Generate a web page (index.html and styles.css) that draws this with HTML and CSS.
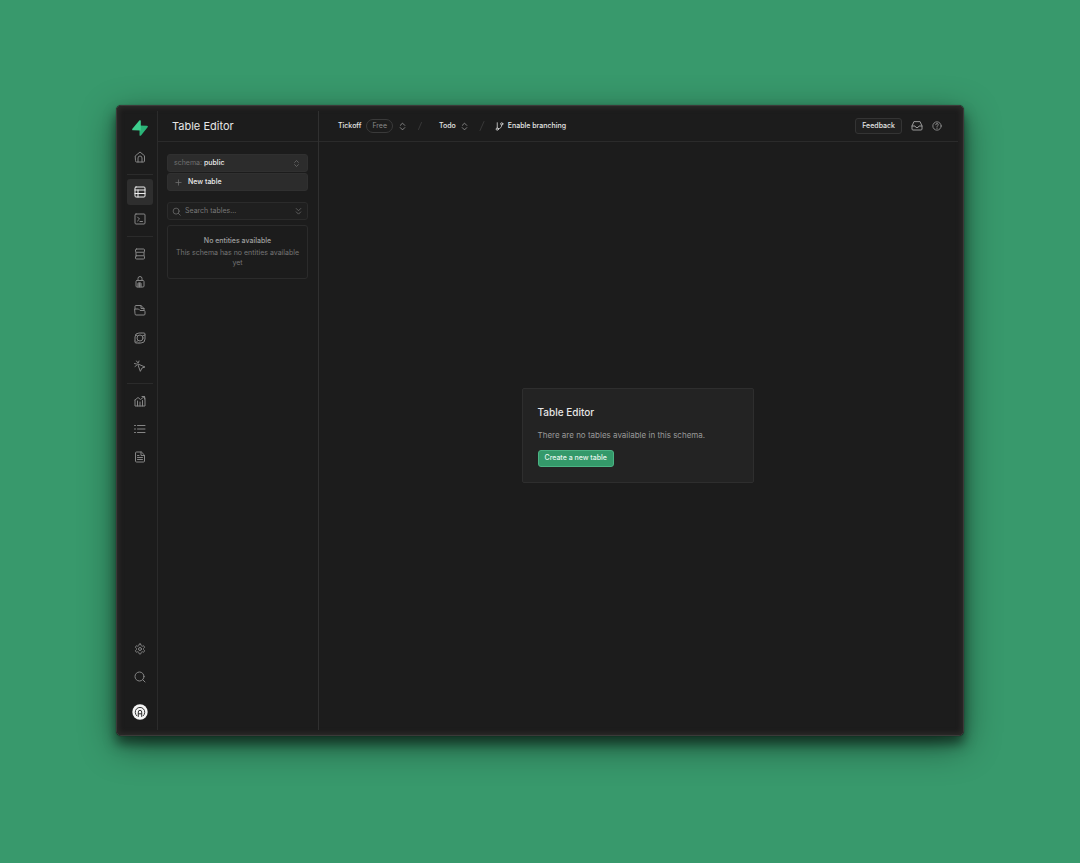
FILE: index.html
```html
<!DOCTYPE html>
<html lang="en">
<head>
<meta charset="utf-8">
<meta name="viewport" content="width=device-width, initial-scale=1">
<title>Table Editor</title>
<link rel="stylesheet" href="styles.css">
</head>
<body>
<div class="window">
  <nav class="rail" aria-label="Main">
    <a class="logo" href="#" aria-label="Dashboard">
      <svg viewBox="0 0 16 16"><path class="logo-dark" d="M7.500 15.200V5.600l7.400.1c.9 0 1.300.9.7 1.600L9 15.400c-.5.600-1.500.5-1.500-.2z"/><path class="logo-light" d="M8.800.8v9.700L1.100 10.300C.2 10.300-.1 9.400.4 8.700L7.300.6C7.800 0 8.800.1 8.800.8z"/></svg>
    </a>
    <div class="group group-home">
      <a class="item" href="#" aria-label="Home"><svg class="icon" viewBox="0 0 24 24"><path d="M3 9.500 12 2l9 7.500V20a2 2 0 0 1-2 2H5a2 2 0 0 1-2-2z"/><path d="M8 22v-8a4 4 0 0 1 8 0v8"/></svg></a>
    </div>
    <hr class="rule">
    <div class="group group-tight">
      <a class="item active" href="#" aria-label="Table Editor"><svg class="icon" viewBox="0 0 24 24"><rect x="2" y="2" width="20" height="20" rx="2"/><path d="M2 8h20M2 15h20M8 8v14"/></svg></a>
      <a class="item" href="#" aria-label="SQL Editor"><svg class="icon" viewBox="0 0 24 24"><rect x="2" y="2" width="20" height="20" rx="2"/><path d="m7 8 4 4-4 4M12 17h5"/></svg></a>
    </div>
    <hr class="rule">
    <div class="group">
      <a class="item" href="#" aria-label="Database"><svg class="icon" viewBox="0 0 24 24"><rect x="3" y="2" width="18" height="6.500" rx="2"/><rect x="3" y="15.500" width="18" height="6.500" rx="2"/><path d="M4 8.500v7M20 8.500v7"/></svg></a>
      <a class="item" href="#" aria-label="Authentication"><svg class="icon" viewBox="0 0 24 24"><rect x="4" y="9" width="16" height="13" rx="2"/><path d="M8 9V5a4 4 0 0 1 8 0v4M8 22v-8h6v8M11 14v8M8 18h6"/></svg></a>
      <a class="item" href="#" aria-label="Storage"><svg class="icon" viewBox="0 0 24 24"><path d="M2 10V5a2 2 0 0 1 2-2h10l6 6v3"/><path d="M2 10h7l3 3h8a2 2 0 0 1 2 2v5a2 2 0 0 1-2 2H4a2 2 0 0 1-2-2zM14 3v6h6"/></svg></a>
      <a class="item" href="#" aria-label="Edge Functions"><svg class="icon" viewBox="0 0 24 24"><circle cx="12" cy="12" r="6"/><path d="M2 18V10a8 8 0 0 1 8-8h4M10 22h4a8 8 0 0 0 8-8V6M15 2h5a2 2 0 0 1 2 2v2l-5 2M2 18v2a2 2 0 0 0 2 2h6M7 8 4 6M8 17l-4 4"/></svg></a>
      <a class="item" href="#" aria-label="Realtime"><svg class="icon" viewBox="0 0 24 24"><path d="m8 8 14 6-6 2-3 6zM5 2l2 3M1 7l4 1M10 2 9 5M2 13l3-2"/></svg></a>
    </div>
    <hr class="rule">
    <div class="group">
      <a class="item" href="#" aria-label="Reports"><svg class="icon" viewBox="0 0 24 24"><path d="M2 10v12h20V6M2 10l6-5 5 4 8-6M16 3h5v5M7 22V12M12 22v-8M17 22V11"/></svg></a>
      <a class="item" href="#" aria-label="Logs"><svg class="icon" viewBox="0 0 24 24"><path d="M7 5h15M7 12h15M7 19h15M1 5h2M1 12h2M1 19h2"/></svg></a>
      <a class="item" href="#" aria-label="API Docs"><svg class="icon" viewBox="0 0 24 24"><path d="M14 2H5a2 2 0 0 0-2 2v16a2 2 0 0 0 2 2h14a2 2 0 0 0 2-2V9zM14 2v7h7M7 9h3M7 13h10M7 17h10"/></svg></a>
    </div>
    <div class="group group-end">
      <a class="item" href="#" aria-label="Settings"><svg class="icon" viewBox="0 0 24 24"><path d="M12.220 2h-.44a2 2 0 0 0-2 2v.18a2 2 0 0 1-1 1.730l-.43.25a2 2 0 0 1-2 0l-.15-.08a2 2 0 0 0-2.730.730l-.22.38a2 2 0 0 0 .730 2.730l.15.1a2 2 0 0 1 1 1.720v.51a2 2 0 0 1-1 1.740l-.15.090a2 2 0 0 0-.730 2.730l.22.38a2 2 0 0 0 2.730.730l.15-.08a2 2 0 0 1 2 0l.43.25a2 2 0 0 1 1 1.730V20a2 2 0 0 0 2 2h.44a2 2 0 0 0 2-2v-.18a2 2 0 0 1 1-1.730l.43-.25a2 2 0 0 1 2 0l.15.08a2 2 0 0 0 2.730-.730l.22-.39a2 2 0 0 0-.730-2.730l-.15-.08a2 2 0 0 1-1-1.740v-.5a2 2 0 0 1 1-1.740l.15-.090a2 2 0 0 0 .730-2.730l-.22-.38a2 2 0 0 0-2.730-.730l-.15.08a2 2 0 0 1-2 0l-.43-.25a2 2 0 0 1-1-1.730V4a2 2 0 0 0-2-2z"/><circle cx="12" cy="12" r="3"/></svg></a>
      <button class="item" type="button" aria-label="Search"><svg class="icon" viewBox="0 0 24 24"><circle cx="11" cy="11" r="9"/><path d="m17.500 17.500 4.500 4.500"/></svg></button>
      <button class="item avatar" type="button" aria-label="Account"><svg viewBox="0 0 16 16"><circle class="avatar-disc" cx="8" cy="8" r="7.700"/><path class="avatar-line" d="M4.800 11.800a4.800 4.800 0 1 1 6.400 0M6.300 12.500V8a1.700 1.700 0 0 1 3.400 0v4.500M6.300 9.800h3.400"/></svg></button>
    </div>
  </nav>

  <aside class="sidebar">
    <header class="bar sidebar-bar"><h1 class="title">Table Editor</h1></header>
    <div class="sidebar-body">
      <button class="field filled" type="button"><span class="muted">schema:</span><span class="strong">public</span><svg class="icon small end" viewBox="0 0 24 24"><path d="m7 9 5-5 5 5M7 15l5 5 5-5"/></svg></button>
      <button class="field filled" type="button"><svg class="icon small plus" viewBox="0 0 24 24"><path d="M12 5v14M5 12h14"/></svg><span class="strong">New table</span></button>
      <div class="field search">
        <svg class="icon small" viewBox="0 0 24 24"><circle cx="11" cy="11" r="8"/><path d="m17 17 5 5"/></svg>
        <input class="search-input" type="text" placeholder="Search tables..." aria-label="Search tables">
        <svg class="icon small" viewBox="0 0 24 24"><path d="m6 4 6 6 6-6M6 13l6 6 6-6"/></svg>
      </div>
      <section class="notice">
        <h2 class="notice-title">No entities available</h2>
        <p class="notice-text">This schema has no entities available yet</p>
      </section>
    </div>
  </aside>

  <div class="content">
    <header class="bar topbar">
      <span class="crumb">Tickoff</span>
      <span class="badge">Free</span>
      <button class="switcher" type="button" aria-label="Switch organization"><svg class="icon small" viewBox="0 0 24 24"><path d="m6 9 6-6 6 6M6 15l6 6 6-6"/></svg></button>
      <svg class="icon slash" viewBox="0 0 24 24"><path d="M15 5 9 19"/></svg>
      <span class="crumb project">Todo</span>
      <button class="switcher" type="button" aria-label="Switch project"><svg class="icon small" viewBox="0 0 24 24"><path d="m6 9 6-6 6 6M6 15l6 6 6-6"/></svg></button>
      <svg class="icon slash" viewBox="0 0 24 24"><path d="M16 3 8 21"/></svg>
      <button class="branch" type="button"><svg class="icon small" viewBox="0 0 24 24"><circle cx="6" cy="19" r="3"/><circle cx="18" cy="5" r="3"/><path d="M6 2v14M18 8c0 6-4 10-9 10"/></svg>Enable branching</button>
      <div class="actions">
        <button class="feedback" type="button">Feedback</button>
        <button class="tool" type="button" aria-label="Inbox"><svg class="icon" viewBox="0 0 24 24"><path d="M22 12h-6l-2 3h-4l-2-3H2"/><path d="M5.500 4 2 12v6a2 2 0 0 0 2 2h16a2 2 0 0 0 2-2v-6l-3.500-8z"/></svg></button>
        <button class="tool" type="button" aria-label="Help"><svg class="icon help" viewBox="0 0 24 24"><circle cx="12" cy="12" r="10"/><path d="M9 9a3 3 0 0 1 6 0c0 2-3 2-3 5M12 17v1"/></svg></button>
      </div>
    </header>
    <main class="stage">
      <section class="card">
        <h2 class="card-title">Table Editor</h2>
        <p class="card-text">There are no tables available in this schema.</p>
        <button class="primary" type="button">Create a new table</button>
      </section>
    </main>
  </div>
</div>
</body>
</html>
```
FILE: styles.css
```css
* { box-sizing: border-box; }

body {
  margin: 0;
  min-height: 100vh;
  padding: 105px 116px 127px;
  display: flex;
  background: #38996c;
  color: #e6e6e6;
  font: 7px/10px Inter, "Liberation Sans", sans-serif;
}

h1, h2, p { margin: 0; font-weight: 500; }

a { color: inherit; }

button {
  margin: 0;
  padding: 0;
  border: 0;
  background: none;
  color: inherit;
  font: inherit;
  cursor: pointer;
}

.window {
  flex: 1;
  display: flex;
  min-width: 0;
  padding: 5px;
  border: 1px solid #3b3a39;
  border-radius: 5px;
  background: #1c1c1c;
  box-shadow:
    inset 0 0 5px 2px #2c2a29,
    0 0 1px rgba(0, 0, 0, 0.6),
    0 8px 12px rgba(0, 0, 0, 0.5),
    0 10px 36px rgba(0, 0, 0, 0.45);
}

.icon {
  width: 12px;
  height: 12px;
  flex: none;
  fill: none;
  stroke: currentColor;
  stroke-width: 2;
  stroke-linecap: round;
  stroke-linejoin: round;
}

.small { width: 9px; height: 9px; }

.rail {
  width: 36px;
  flex: none;
  display: flex;
  flex-direction: column;
  align-items: center;
  padding: 9px 0 5px;
  border-right: 1px solid #2b2b2b;
  color: #858585;
}

.logo { width: 16px; height: 16px; }
.logo svg { display: block; width: 16px; height: 16px; }
.logo-light { fill: #3ecf8e; }
.logo-dark { fill: #2bb478; }

.group { display: flex; flex-direction: column; gap: 2px; }
.group-tight { gap: 1px; }
.group-home { margin-top: 8px; }
.group-end { margin-top: auto; }

.item {
  width: 26px;
  height: 26px;
  display: grid;
  place-items: center;
  border-radius: 3px;
}

.active { background: #2e2e2e; color: #ededed; }

.rule {
  width: 26px;
  height: 1px;
  margin: 4px 0;
  border: 0;
  background: #2b2b2b;
}

.avatar { margin-top: 7px; }
.avatar svg { width: 16px; height: 16px; }
.avatar-disc { fill: #f4f4f4; }
.avatar-line { fill: none; stroke: #333; stroke-width: 1; stroke-linecap: round; }

.sidebar {
  width: 161px;
  flex: none;
  border-right: 1px solid #303030;
}

.bar {
  height: 31px;
  display: flex;
  align-items: center;
  border-bottom: 1px solid #2b2b2b;
}

.sidebar-bar { padding-left: 14px; }
.title { font-size: 11px; line-height: 14px; font-weight: 400; }

.sidebar-body { padding: 12px 10px 0 9px; }

.field {
  width: 100%;
  height: 18px;
  display: flex;
  align-items: center;
  padding: 0 6px;
  border: 1px solid #2b2b2b;
  border-radius: 3px;
  color: #707070;
}

.filled { margin-bottom: 1px; border-color: #303030; background: #2c2c2c; }
.muted { margin-right: 2px; }
.strong { color: #ededed; font-weight: 500; }
.plus { margin-right: 5px; }
.end { margin-left: auto; }

.search { margin-top: 11px; padding: 0 4px; background: #1f1f1f; }
.search-input {
  flex: 1;
  min-width: 0;
  padding: 0 0 0 4px;
  border: 0;
  outline: 0;
  background: none;
  color: #ededed;
  font: inherit;
}
.search-input::placeholder { color: #777; opacity: 1; }

.notice {
  margin-top: 5px;
  padding: 9px 4px 10px;
  border: 1px solid #2b2b2b;
  border-radius: 3px;
  text-align: center;
}
.notice-title { margin-bottom: 1px; font-size: 7px; line-height: 12px; color: #a0a0a0; }
.notice-text { font-weight: 400; color: #757575; }

.content { flex: 1; min-width: 0; display: flex; flex-direction: column; }

.topbar { padding: 0 16px 0 19px; font-weight: 500; }
.badge {
  margin: 0 5px;
  padding: 1px 5px;
  border: 1px solid #3a3a3a;
  border-radius: 8px;
  color: #8a8a8a;
  font-weight: 400;
}
.project { margin: 0 4px 0 6px; }
.switcher { display: grid; color: #a0a0a0; }
.slash { margin: 0 7px; color: #383838; }
.branch { display: flex; align-items: center; gap: 4px; font-weight: 500; }

.actions { margin-left: auto; display: flex; align-items: center; gap: 9px; }
.feedback {
  height: 16px;
  padding: 0 6px;
  border: 1px solid #343434;
  border-radius: 3px;
  background: #202020;
  font-weight: 500;
}
.tool { display: grid; color: #999; }
.help { width: 10px; height: 10px; }

.stage { flex: 1; display: grid; place-items: center; padding: 0 2px 2px 0; }

.card {
  width: 232px;
  padding: 16px 15px 15px;
  border: 1px solid #2e2e2e;
  border-radius: 2px;
  background: #232323;
}
.card-title { font-size: 10px; line-height: 14px; }
.card-text { margin: 11px 0 10px; font-size: 8px; font-weight: 400; color: #999; }
.primary {
  height: 17px;
  padding: 0 6px;
  border: 1px solid #4bb384;
  border-radius: 3px;
  background: #34996a;
  color: #e6f5ed;
  font-weight: 500;
}
```
